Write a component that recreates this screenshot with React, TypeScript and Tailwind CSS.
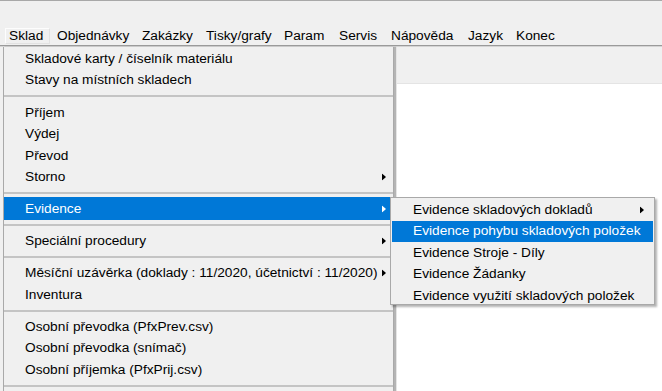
import React from 'react'

type Entry = { label: string; sub?: boolean; active?: boolean } | 'sep' | 'sepTight'

const menuBar = [
    { label: 'Sklad', w: 'w-[52px]', open: true },
    { label: 'Objednávky', w: 'w-[85px]' },
    { label: 'Zakázky', w: 'w-[64px]' },
    { label: 'Tisky/grafy', w: 'w-[78px]' },
    { label: 'Param', w: 'w-[55px]' },
    { label: 'Servis', w: 'w-[52px]' },
    { label: 'Nápověda', w: 'w-[77px]' },
    { label: 'Jazyk', w: 'w-[48px]' },
    { label: 'Konec', w: 'w-[60px]' },
]

const skladItems: Entry[] = [
    { label: 'Skladové karty / číselník materiálu' },
    { label: 'Stavy na místních skladech' },
    'sep',
    { label: 'Příjem' },
    { label: 'Výdej' },
    { label: 'Převod' },
    { label: 'Storno', sub: true },
    'sepTight',
    { label: 'Evidence', sub: true, active: true },
    'sepTight',
    { label: 'Speciální procedury', sub: true },
    'sep',
    { label: 'Měsíční uzávěrka (doklady : 11/2020, účetnictví : 11/2020)', sub: true },
    { label: 'Inventura' },
    'sep',
    { label: 'Osobní převodka (PfxPrev.csv)' },
    { label: 'Osobní převodka (snímač)' },
    { label: 'Osobní příjemka (PfxPrij.csv)' },
    'sep',
]

const evidenceItems = [
    { label: 'Evidence skladových dokladů', sub: true },
    { label: 'Evidence pohybu skladových položek', active: true },
    { label: 'Evidence Stroje - Díly' },
    { label: 'Evidence Žádanky' },
    { label: 'Evidence využití skladových položek' },
]

const Arrow = ({ white }: { white?: boolean }) => (
    <svg width="4" height="7" viewBox="0 0 4 7" className="shrink-0">
        <polygon points="0,0 4,3.5 0,7" fill={white ? '#ffffff' : '#000000'} />
    </svg>
)

const Separator = ({ tight }: { tight?: boolean }) => (
    <div className={`flex items-center ${tight ? 'h-[10px]' : 'h-[11px]'}`}>
        <div className="h-[2px] w-full bg-[#c4c4c4]" />
    </div>
)

const SkladMenu = () => (
    <div className="flex w-[391px] flex-col border-l border-r border-[#a9a9a9] bg-[#f0f0f0] pt-[1px] shadow-[2px_0_1px_rgba(0,0,0,0.25)]">
        {skladItems.map((item, i) => {
            if (item === 'sep') return <Separator key={i} />
            if (item === 'sepTight') return <Separator key={i} tight />
            return (
                <div
                    key={i}
                    className={`relative flex items-center whitespace-nowrap pl-[21px] ${
                        item.active ? 'mr-[3px] h-[23.5px] bg-[#0078d7] pt-[1px] text-white' : 'h-[21.5px] pt-[1px] text-black'
                    }`}
                >
                    <span>{item.label}</span>
                    {item.sub && (
                        <span className={`absolute top-1/2 -translate-y-1/2 ${item.active ? 'right-[4px]' : 'right-[7px]'}`}>
                            <Arrow white={item.active} />
                        </span>
                    )}
                </div>
            )
        })}
    </div>
)

const EvidenceMenu = () => (
    <div className="absolute left-[390px] top-[197px] h-[108px] w-[265px] overflow-hidden border border-[#a9a9a9] bg-[#f0f0f0] pt-[1px] shadow-[2px_2px_2px_rgba(0,0,0,0.3)]">
        {evidenceItems.map((item) => (
            <div
                key={item.label}
                className={`relative mx-[1px] flex h-[21.5px] items-center whitespace-nowrap pl-[21px] pt-[1px] ${
                    item.active ? 'bg-[#0078d7] text-white' : 'text-black'
                }`}
            >
                <span>{item.label}</span>
                {item.sub && (
                    <span className="absolute right-[9px] top-1/2 -translate-y-1/2">
                        <Arrow />
                    </span>
                )}
            </div>
        ))}
    </div>
)

const App = () => {
    return (
        <div className="relative h-[391px] w-[662px] overflow-hidden bg-[#f0f0f0] font-['Liberation_Sans',Arial,sans-serif] text-[13.7px] text-black">
            <div className="h-[27px] border-t border-[#a8a8a8]" />
            <div className="flex h-[18px] flex-row items-center pl-[5px]">
                {menuBar.map((m) =>
                    m.open ? (
                        <div
                            key={m.label}
                            className="mr-[7px] flex h-[16px] w-[45px] items-center border border-[#fdfdfd] border-b-[#e2e2e2] border-r-[#e2e2e2] pl-[3px] pt-[1px]"
                        >
                            {m.label}
                        </div>
                    ) : (
                        <div key={m.label} className={`${m.w} whitespace-nowrap pt-[1px]`}>
                            {m.label}
                        </div>
                    )
                )}
            </div>
            <div className="h-[1px] bg-[#9a9a9a]" />
            <div className="h-[1px] bg-[#d4d4d4]" />
            <div className="flex h-[344px] flex-row">
                <div className="w-[3px]" />
                <SkladMenu />
                <div className="flex flex-1 flex-col pl-[3px]">
                    <div className="h-[37px] border-b border-[#e4e4e4] bg-[#f0f0f0]" />
                    <div className="flex-1 bg-white" />
                </div>
            </div>
            <EvidenceMenu />
        </div>
    )
}

export default App
